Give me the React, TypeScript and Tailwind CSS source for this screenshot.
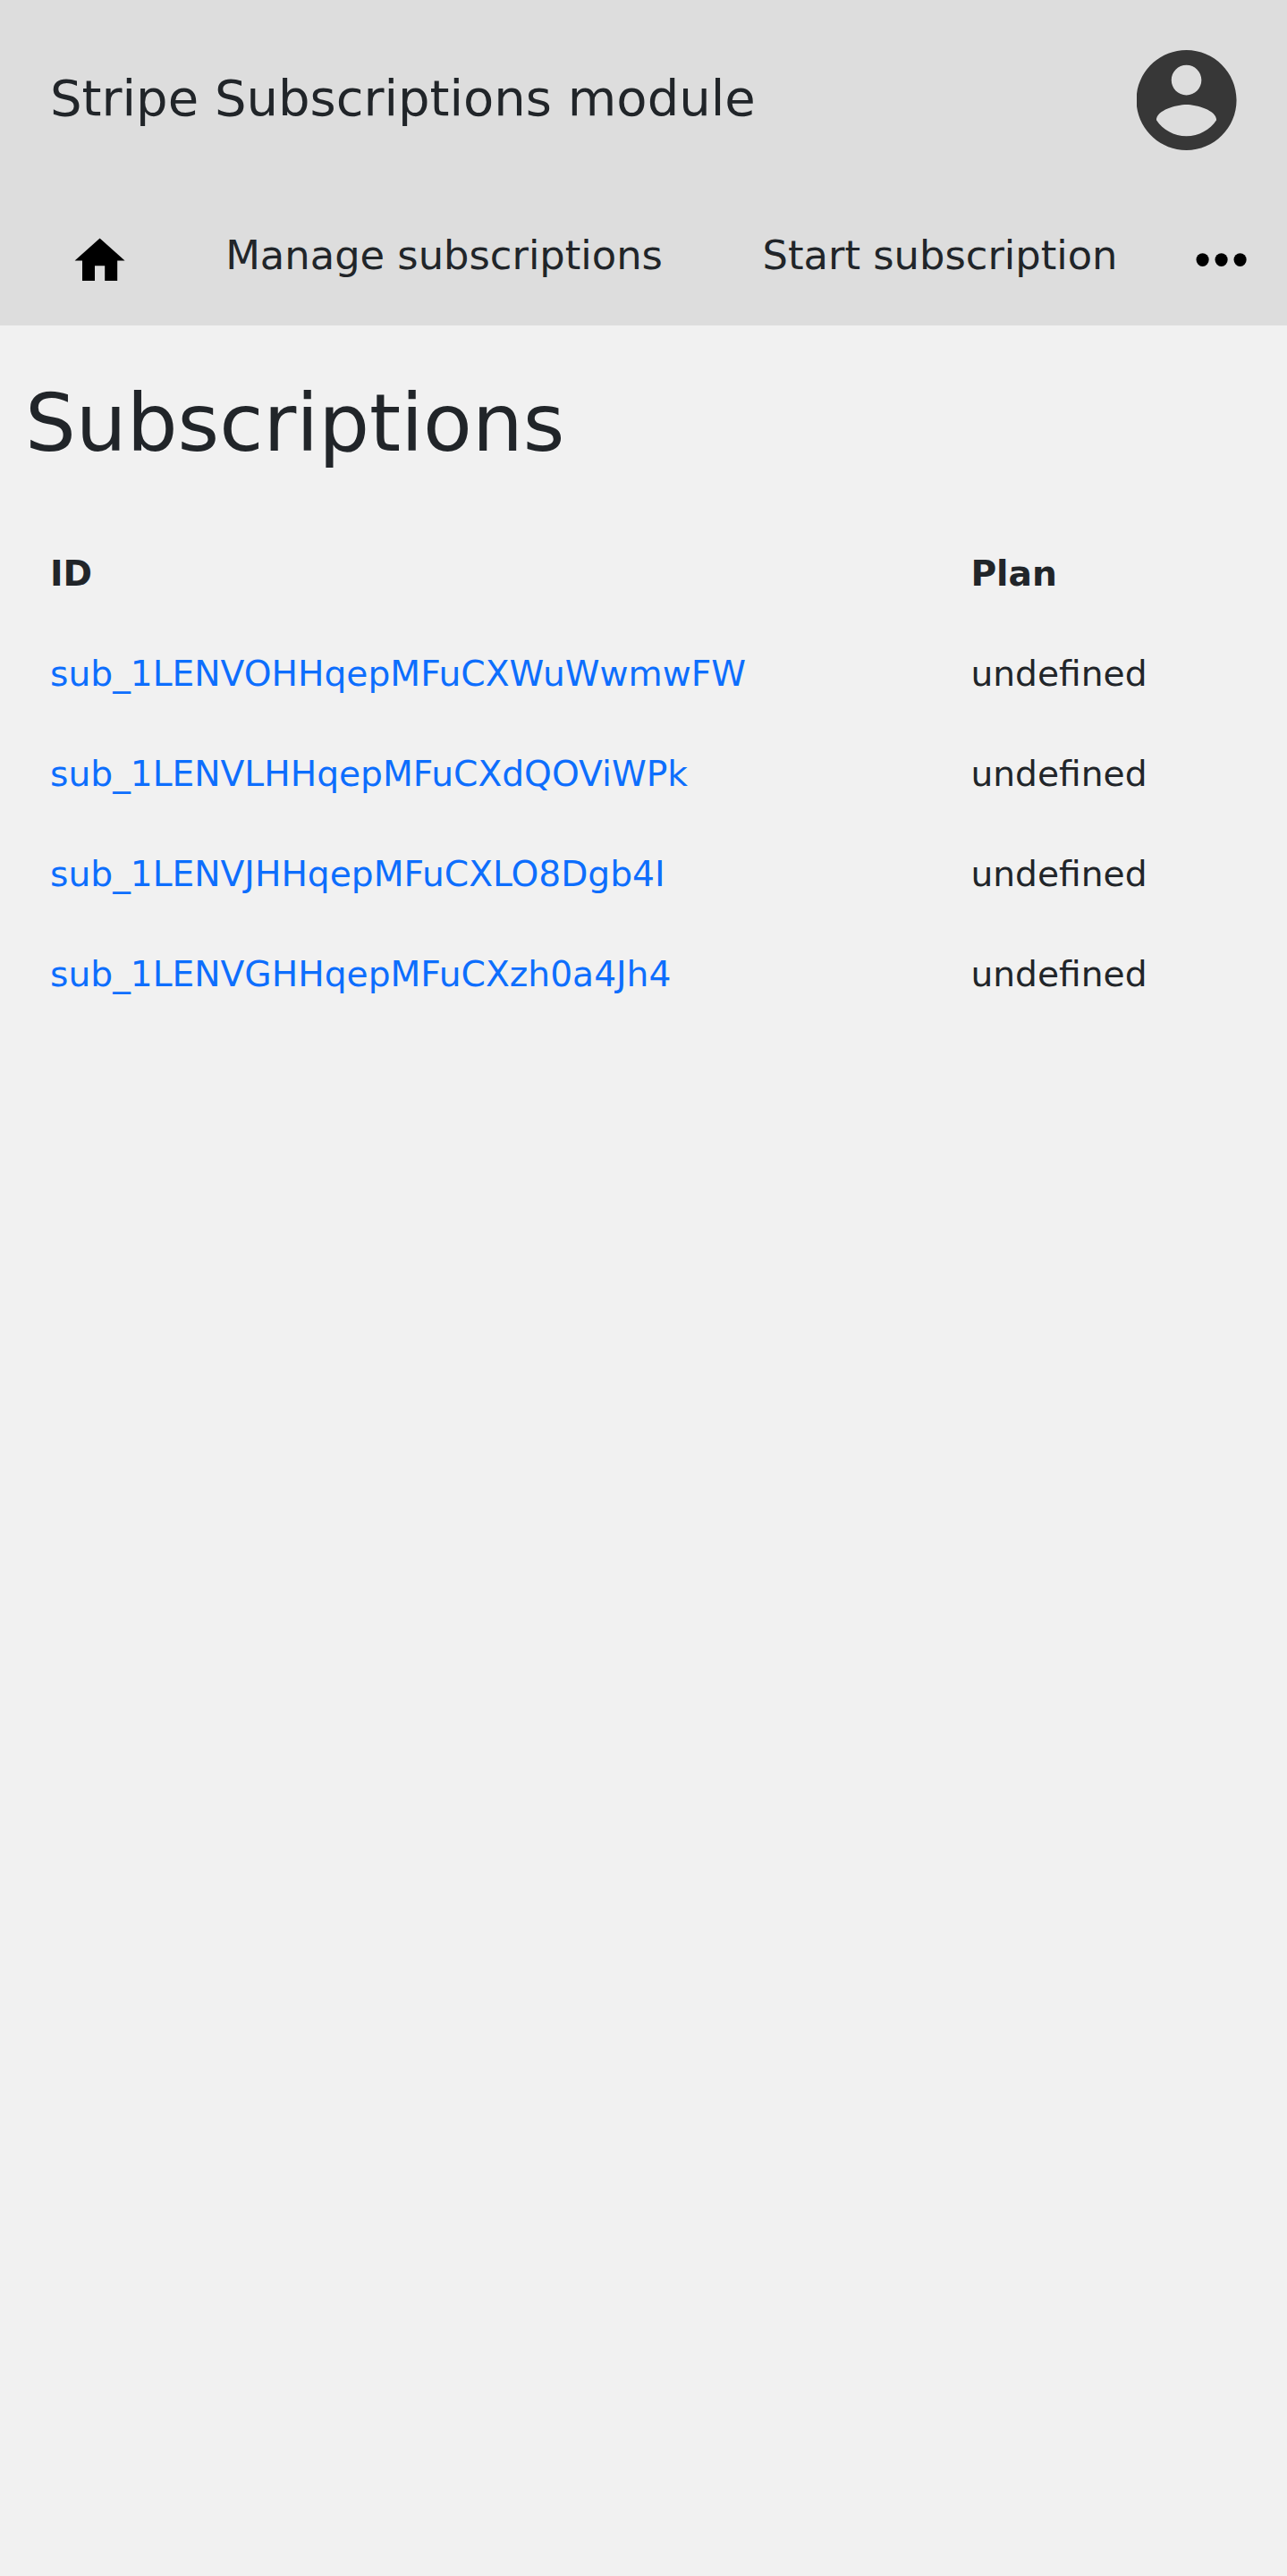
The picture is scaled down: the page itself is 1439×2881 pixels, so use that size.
const rows = ['sub_1LENVOHHqepMFuCXWuWwmwFW', 'sub_1LENVLHHqepMFuCXdQOViWPk', 'sub_1LENVJHHqepMFuCXLO8Dgb4I', 'sub_1LENVGHHqepMFuCXzh0a4Jh4']

export default function App() {
  return (
    <div className="min-h-[2881px] w-[1439px] overflow-hidden bg-[#f1f1f1] font-['DejaVu_Sans',sans-serif] text-[#212529]">
      <header className="h-[364px] bg-[#dddddd]">
        <div className="flex h-[224px] items-center justify-between px-[56px]">
          <div className="pb-[4px] text-[56px] leading-[80px] whitespace-nowrap">Stripe Subscriptions module</div>
          <svg className="h-[112px] w-[112px]" viewBox="2.08 2 20 20" fill="#373737">
            <path d="M12 2C6.48 2 2 6.48 2 12s4.48 10 10 10 10-4.48 10-10S17.52 2 12 2zm0 3c1.66 0 3 1.34 3 3s-1.34 3-3 3-3-1.34-3-3 1.34-3 3-3zm0 14.200c-2.500 0-4.710-1.280-6-3.220.03-1.990 4-3.080 6-3.080 1.990 0 5.970 1.090 6 3.080-1.290 1.940-3.500 3.220-6 3.220z" />
          </svg>
        </div>
        <nav className="flex pl-[78.4px] text-[44.8px] leading-[66px] whitespace-nowrap">
          <a className="w-[173.8px] pt-[34px]">
            <svg className="h-[67.2px] w-[67.2px]" viewBox="0 0 24 24" fill="#000"><path d="M10 20v-6h4v6h5v-8h3L12 3 2 12h3v8z" /></svg>
          </a>
          <a className="w-[600.4px] pt-[28.5px]">Manage subscriptions</a>
          <a className="w-[479px] pt-[28.5px]">Start subscription</a>
          <a className="pt-[33px]">
            <svg className="h-[67.2px] w-[67.2px]" viewBox="0 0 24 24" fill="#000">
              <ellipse cx="4.5" cy="12" rx="2.52" ry="2.65" />
              <ellipse cx="12" cy="12" rx="2.52" ry="2.65" />
              <ellipse cx="19.5" cy="12" rx="2.52" ry="2.65" />
            </svg>
          </a>
        </nav>
      </header>
      <main>
        <h1 className="pt-[55px] pl-[28px] text-[89.6px] leading-[108px] font-normal">Subscriptions</h1>
        <div className="mt-[58.5px] grid grid-cols-[1029.4px_1fr] pl-[56px] text-[39.2px] leading-[112px]">
          <div className="font-bold">ID</div>
          <div className="font-bold">Plan</div>
          {rows.map((id) => (
            <div key={id} className="contents">
              <a className="text-[#0d6efd]">{id}</a>
              <div>undefined</div>
            </div>
          ))}
        </div>
      </main>
    </div>
  )
}
